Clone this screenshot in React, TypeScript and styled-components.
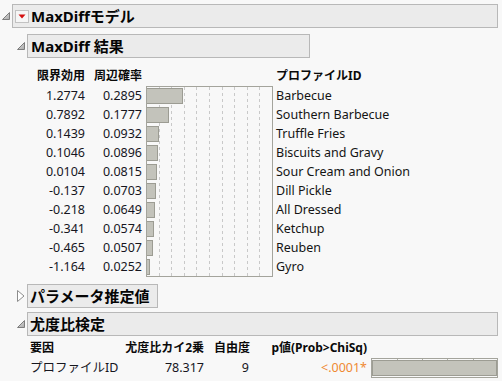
import React from "react";
import styled, { createGlobalStyle } from "styled-components";

const GlobalStyle = createGlobalStyle`
    html, body {
        margin: 0;
        padding: 0;
        background: #f8f8f8;
    }
    body {
        font-family: "Noto Sans", "Noto Sans CJK JP", sans-serif;
        color: #111;
    }
`;

const results = [
    { util: "1.2774", prob: 0.2895, name: "Barbecue" },
    { util: "0.7892", prob: 0.1777, name: "Southern Barbecue" },
    { util: "0.1439", prob: 0.0932, name: "Truffle Fries" },
    { util: "0.1046", prob: 0.0896, name: "Biscuits and Gravy" },
    { util: "0.0104", prob: 0.0815, name: "Sour Cream and Onion" },
    { util: "-0.137", prob: 0.0703, name: "Dill Pickle" },
    { util: "-0.218", prob: 0.0649, name: "All Dressed" },
    { util: "-0.341", prob: 0.0574, name: "Ketchup" },
    { util: "-0.465", prob: 0.0507, name: "Reuben" },
    { util: "-1.164", prob: 0.0252, name: "Gyro" },
];

const OpenIcon = () => (
    <ToggleSvg width="8" height="8" viewBox="0 0 8 8">
        <defs>
            <linearGradient id="tri" x1="0" y1="0" x2="1" y2="1">
                <stop offset="0" stopColor="#e2e2e2" />
                <stop offset="1" stopColor="#a9a9a9" />
            </linearGradient>
        </defs>
        <polygon points="7.5,0.5 7.5,7.5 0.5,7.5" fill="url(#tri)" stroke="#7d7d7d" strokeWidth="1" />
    </ToggleSvg>
);

const ClosedIcon = () => (
    <ToggleSvg width="8" height="12" viewBox="0 0 8 12">
        <polygon points="0.5,0.5 7,6 0.5,11.5" fill="#ffffff" stroke="#8c8c8c" strokeWidth="1" />
    </ToggleSvg>
);

const MenuButton = () => (
    <MenuBox>
        <svg width="12" height="11" viewBox="0 0 12 11">
            <polygon points="2.5,3.5 9.5,3.5 6,7.5" fill="#d40f0f" />
        </svg>
    </MenuBox>
);

const Chart: React.FC<{ rows: typeof results }> = ({ rows }) => {
    const w = 127;
    const h = 191;
    const scale = 126;
    const grid = [1, 2, 3, 4, 5, 6, 7, 8, 9].map((k) => Math.round(k * 12.6) + 0.5);
    return (
        <ChartSvg width={w} height={h} viewBox={`0 0 ${w} ${h}`}>
            {grid.map((x) => (
                <line key={x} x1={x} y1={1} x2={x} y2={h - 1} stroke="#c9c9c9" strokeDasharray="3 3" />
            ))}
            {rows.map((r, i) => (
                <rect
                    key={r.name}
                    x={0.5}
                    y={i * 19 + 2.5}
                    width={Math.max(3, Math.round(r.prob * scale))}
                    height={15}
                    fill="#c3c3bb"
                    stroke="#9c9c93"
                />
            ))}
            <rect x={0.5} y={0.5} width={w - 1} height={h - 1} fill="none" stroke="#a4a49c" />
        </ChartSvg>
    );
};

const PBar = () => (
    <svg width="127" height="20" viewBox="0 0 127 20">
        <rect x="0.5" y="0.5" width="126" height="19" fill="none" stroke="#a4a49c" />
        {[26, 51, 76, 102].map((x) => (
            <line key={x} x1={x + 0.5} y1={1} x2={x + 0.5} y2={2} stroke="#b0b0a8" />
        ))}
        <rect x="1.5" y="2.5" width="124" height="15" fill="#c3c3bb" stroke="#9c9c93" />
    </svg>
);

const App: React.FC = () => {
    return (
        <Page>
            <GlobalStyle />
            <Node>
                <HeadRow>
                    <OpenIcon />
                    <HeadBox>
                        <MenuButton />
                        <span>MaxDiffモデル</span>
                    </HeadBox>
                </HeadRow>
                <OuterBody>
                    <Node $gap={6}>
                        <HeadRow>
                            <OpenIcon />
                            <HeadBox $width={283} $pad={3}>MaxDiff 結果</HeadBox>
                        </HeadRow>
                        <Body>
                            <ResultGrid>
                                <ColHead $pad={1}>限界効用</ColHead>
                                <ColHead $pad={4}>周辺確率</ColHead>
                                <div />
                                <NameHead>プロファイルID</NameHead>
                                <ChartCell>
                                    <Chart rows={results} />
                                </ChartCell>
                                {results.map((r, i) => (
                                    <React.Fragment key={r.name}>
                                        <Num $pad={1} style={{ gridRow: i + 2, gridColumn: 1 }}>{r.util}</Num>
                                        <Num $pad={4} style={{ gridRow: i + 2, gridColumn: 2 }}>{r.prob.toFixed(4)}</Num>
                                        <Name style={{ gridRow: i + 2, gridColumn: 4 }}>{r.name}</Name>
                                    </React.Fragment>
                                ))}
                            </ResultGrid>
                        </Body>
                    </Node>
                    <Node $gap={7}>
                        <HeadRow>
                            <ClosedIcon />
                            <HeadBox $width={131} $pad={2}>パラメータ推定値</HeadBox>
                        </HeadRow>
                    </Node>
                    <Node $gap={4}>
                        <HeadRow>
                            <OpenIcon />
                            <HeadBox $pad={2}>尤度比検定</HeadBox>
                        </HeadRow>
                        <Body>
                            <TestGrid>
                                <TestHead $align="left">要因</TestHead>
                                <TestHead>尤度比カイ2乗</TestHead>
                                <TestHead>自由度</TestHead>
                                <TestHead $pad={4}>p値(Prob&gt;ChiSq)</TestHead>
                                <div />
                                <TestCell $align="left">プロファイルID</TestCell>
                                <TestCell>78.317</TestCell>
                                <TestCell $pad={1}>9</TestCell>
                                <PValue>&lt;.0001*</PValue>
                                <BarCell>
                                    <PBar />
                                </BarCell>
                            </TestGrid>
                        </Body>
                    </Node>
                </OuterBody>
            </Node>
        </Page>
    );
};

export default App;

const Page = styled.div`
    width: 502px;
    box-sizing: border-box;
    padding: 4px 4px 0 2px;
`;

const Node = styled.div<{ $gap?: number }>`
    display: flex;
    flex-direction: column;
    margin-top: ${(p) => p.$gap ?? 0}px;
`;

const HeadRow = styled.div`
    display: flex;
    align-items: center;
    gap: 2px;
`;

const ToggleSvg = styled.svg`
    flex: none;
    display: block;
`;

const HeadBox = styled.div<{ $width?: number; $pad?: number }>`
    box-sizing: border-box;
    height: 24px;
    border: 1px solid #b8b8b8;
    background: #ebebeb;
    display: flex;
    align-items: center;
    gap: 2px;
    padding-left: ${(p) => p.$pad ?? 2}px;
    font-size: 15px;
    font-weight: 700;
    line-height: 1;
    color: #050505;
    white-space: nowrap;
    ${(p) => (p.$width ? `width: ${p.$width}px;` : "flex: 1;")}
`;

const MenuBox = styled.div`
    box-sizing: border-box;
    width: 14px;
    height: 13px;
    border: 1px solid #c2c2c2;
    background: #f6f6f6;
    display: flex;
    align-items: center;
    justify-content: center;

    svg {
        display: block;
    }
`;

const OuterBody = styled.div`
    display: flex;
    flex-direction: column;
    padding-left: 15px;
`;

const Body = styled.div`
    padding-left: 10px;
`;

const ResultGrid = styled.div`
    display: grid;
    grid-template-columns: 56px 60px 127px auto;
    grid-template-rows: 20px repeat(10, 19px);
    margin: 8px 0 1px 3px;
    font-size: 12.5px;
    line-height: 19px;
    white-space: nowrap;
`;

const ColHead = styled.div<{ $pad?: number }>`
    text-align: right;
    padding-right: ${(p) => p.$pad ?? 0}px;
    font-size: 12px;
    font-weight: 700;
    line-height: 20px;
    color: #0a0a0a;
`;

const NameHead = styled.div`
    padding-left: 3px;
    font-size: 12px;
    font-weight: 700;
    line-height: 20px;
    color: #0a0a0a;
`;

const ChartCell = styled.div`
    grid-column: 3;
    grid-row: 2 / span 10;
    height: 190px;
`;

const ChartSvg = styled.svg`
    display: block;
`;

const Num = styled.div<{ $pad?: number }>`
    text-align: right;
    padding-right: ${(p) => p.$pad ?? 0}px;
    color: #16161e;
`;

const Name = styled.div`
    padding-left: 3px;
    color: #141414;
`;

const TestGrid = styled.div`
    display: grid;
    grid-template-columns: 94px 80px 46px 121px 127px;
    grid-template-rows: 18px 22px;
    align-items: center;
    margin: 3px 0 0 3px;
    font-size: 12.5px;
    white-space: nowrap;
`;

const TestHead = styled.div<{ $align?: string; $pad?: number }>`
    text-align: ${(p) => p.$align ?? "right"};
    padding-right: ${(p) => p.$pad ?? 0}px;
    font-size: 12px;
    font-weight: 700;
    line-height: 18px;
    color: #0a0a0a;
`;

const TestCell = styled.div<{ $align?: string; $pad?: number }>`
    text-align: ${(p) => p.$align ?? "right"};
    padding-right: ${(p) => p.$pad ?? 0}px;
    line-height: 20px;
    color: #16161e;
`;

const PValue = styled.div`
    text-align: right;
    padding-right: 4px;
    line-height: 20px;
    color: #ef8a33;
`;

const BarCell = styled.div`
    svg {
        display: block;
    }
`;
